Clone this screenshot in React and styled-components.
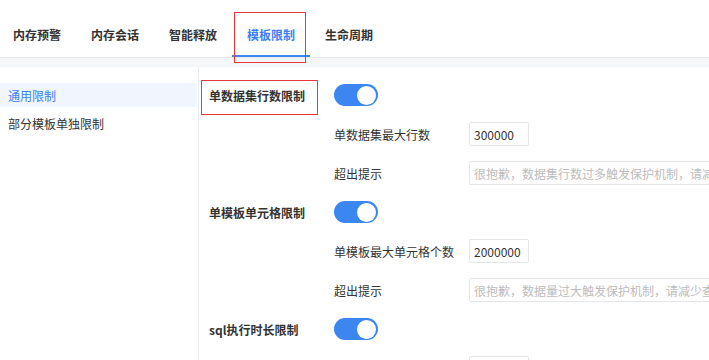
import React from "react";
import styled, { createGlobalStyle } from "styled-components";

const Global = createGlobalStyle`
  html, body { margin: 0; padding: 0; background: #fff; overflow: hidden; }
  body { font-family: "Noto Sans CJK SC", "Noto Sans", sans-serif; font-size: 12px; color: #333; }
  * { box-sizing: border-box; }
`;

const Page = styled.div`
  width: 709px;
  height: 360px;
  display: flex;
  flex-direction: column;
  overflow: hidden;
`;

const TabBar = styled.div`
  height: 58px;
  flex: none;
  display: flex;
  align-items: flex-end;
  border-bottom: 1px solid #e6e8ec;
  padding-left: 0;
`;

const TabList = styled.div`
  display: flex;
  margin-left: -2px;
`;

const Tab = styled.div`
  position: relative;
  height: 41px;
  padding: 0 15px;
  display: flex;
  align-items: center;
  padding-bottom: 2px;
  font-weight: 600;
  font-size: 12px;
  color: ${(p) => (p.$active ? "#3b7ff2" : "#333")};
  border-bottom: 2px solid ${(p) => (p.$active ? "#3b86f0" : "transparent")};
`;

const Annotation = styled.div`
  position: absolute;
  border: 1px solid #e8383d;
  pointer-events: none;
`;

const Band = styled.div`
  height: 9px;
  flex: none;
  background: #f5f6f8;
`;

const Body = styled.div`
  flex: 1;
  display: flex;
  min-height: 0;
`;

const Sidebar = styled.div`
  width: 199px;
  flex: none;
  border-right: 1px solid #e8e9ec;
  padding-top: 16px;
  display: flex;
  flex-direction: column;
  gap: 4px;
`;

const SideItem = styled.div`
  height: 24px;
  display: flex;
  align-items: center;
  padding-left: 8px;
  font-size: 12px;
  color: ${(p) => (p.$active ? "#3b7ff2" : "#333")};
  background: ${(p) => (p.$active ? "#f0f5fe" : "transparent")};
  margin-right: 1px;
`;

const Content = styled.div`
  flex: 1;
  padding: 16px 0 0 10px;
  display: flex;
  flex-direction: column;
  gap: 15px;
  min-width: 0;
`;

const Row = styled.div`
  position: relative;
  height: 24px;
  flex: none;
  display: flex;
  align-items: center;
  padding-left: ${(p) => (p.$sub ? "125px" : "0")};
`;

const SectionLabel = styled.div`
  width: 125px;
  flex: none;
  font-weight: 700;
  color: #333;
  white-space: nowrap;
`;

const SubLabel = styled.div`
  width: 135px;
  flex: none;
  color: #333;
  white-space: nowrap;
`;

const Toggle = styled.div`
  width: 44px;
  height: 22px;
  border-radius: 11px;
  background: #3b86f0;
  display: flex;
  align-items: center;
  justify-content: flex-end;
  padding-right: 2px;
  flex: none;
`;

const Knob = styled.div`
  width: 19px;
  height: 19px;
  border-radius: 50%;
  background: #fff;
`;

const Input = styled.input`
  height: 24px;
  width: ${(p) => p.$w}px;
  flex: none;
  border: 1px solid #e3e5e9;
  border-radius: 2px;
  padding: 0 4px;
  font-family: "Noto Sans CJK SC", "Noto Sans", sans-serif;
  font-size: 12px;
  color: #333;
  outline: none;
  &::placeholder { color: #bcbcbc; }
`;

const tabs = ["内存预警", "内存会话", "智能释放", "模板限制", "生命周期"];

const sections = [
  {
    title: "单数据集行数限制",
    marked: true,
    max: "单数据集最大行数",
    value: "300000",
    tip: "很抱歉，数据集行数过多触发保护机制，请减少查询的数据量",
  },
  {
    title: "单模板单元格限制",
    max: "单模板最大单元格个数",
    value: "2000000",
    tip: "很抱歉，数据量过大触发保护机制，请减少查询的数据量",
  },
  {
    title: "sql执行时长限制",
    max: "sql最大执行时长",
    value: "60",
    tip: "很抱歉，sql执行时间过长触发保护机制",
  },
];

export default function App() {
  return (
    <Page>
      <Global />
      <TabBar>
        <TabList>
          {tabs.map((t, i) => (
            <Tab key={t} $active={i === 3}>
              {t}
              {i === 3 && (
                <Annotation style={{ left: 2, top: -4, width: 72, height: 51 }} />
              )}
            </Tab>
          ))}
        </TabList>
      </TabBar>
      <Band />
      <Body>
        <Sidebar>
          <SideItem $active>通用限制</SideItem>
          <SideItem>部分模板单独限制</SideItem>
        </Sidebar>
        <Content>
          {sections.map((s) => (
            <React.Fragment key={s.title}>
              <Row>
                <SectionLabel>{s.title}</SectionLabel>
                <Toggle>
                  <Knob />
                </Toggle>
                {s.marked && (
                  <Annotation style={{ left: -8, top: -3, width: 117, height: 35 }} />
                )}
              </Row>
              <Row $sub>
                <SubLabel>{s.max}</SubLabel>
                <Input $w={60} defaultValue={s.value} readOnly />
              </Row>
              <Row $sub>
                <SubLabel>超出提示</SubLabel>
                <Input $w={420} placeholder={s.tip} readOnly />
              </Row>
            </React.Fragment>
          ))}
        </Content>
      </Body>
    </Page>
  );
}
